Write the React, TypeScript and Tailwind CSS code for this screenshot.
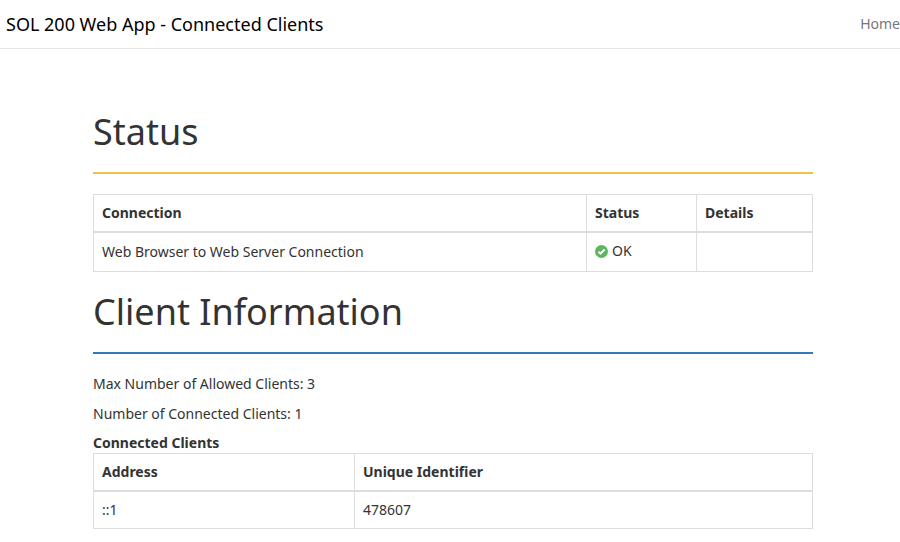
export default function App() {
  const th = "border border-[#ddd] border-b-2 px-2 py-2 text-left font-bold leading-[20px]";
  const td = "border border-[#ddd] px-2 py-2 leading-[20px]";
  return (
    <div className="min-h-[542px] bg-white text-[#333] text-[14px] leading-[20px] font-['Liberation_Sans']">
      <div className="h-[49px] border-b border-[#e7e7e7] flex items-center justify-between">
        <span className="pl-[6px] text-[18px] text-black">SOL 200 Web App - Connected Clients</span>
        <span className="text-[#777] text-[14px]">Home</span>
      </div>
      <div className="ml-[93px] w-[720px]">
        <h1 className="text-[36px] leading-[40px] mt-[63px] pb-[20px] border-b-2 border-[#f0c24b]">Status</h1>
        <table className="w-full border-collapse mt-[20px]">
          <thead>
            <tr>
              <th className={th + " w-[493px]"}>Connection</th>
              <th className={th + " w-[110px]"}>Status</th>
              <th className={th}>Details</th>
            </tr>
          </thead>
          <tbody>
            <tr>
              <td className={td}>Web Browser to Web Server Connection</td>
              <td className={td}>
                <span className="inline-flex items-center gap-[4px]">
                  <svg width="13" height="13" viewBox="0 0 14 14">
                    <circle cx="7" cy="7" r="7" fill="#5cb85c" />
                    <path d="M3.8 7.2 L6 9.3 L10.3 4.9" stroke="#fff" strokeWidth="2.2" fill="none" />
                  </svg>
                  OK
                </span>
              </td>
              <td className={td}></td>
            </tr>
          </tbody>
        </table>
        <h1 className="text-[36px] leading-[40px] mt-[20px] pb-[20px] border-b-2 border-[#337ab7]">Client Information</h1>
        <p className="mt-[20px]">Max Number of Allowed Clients: 3</p>
        <p className="mt-[10px]">Number of Connected Clients: 1</p>
        <p className="mt-[9px] font-bold">Connected Clients</p>
        <table className="w-full border-collapse">
          <thead>
            <tr>
              <th className={th + " w-[261px]"}>Address</th>
              <th className={th}>Unique Identifier</th>
            </tr>
          </thead>
          <tbody>
            <tr>
              <td className={td}>::1</td>
              <td className={td}>478607</td>
            </tr>
          </tbody>
        </table>
      </div>
    </div>
  );
}
